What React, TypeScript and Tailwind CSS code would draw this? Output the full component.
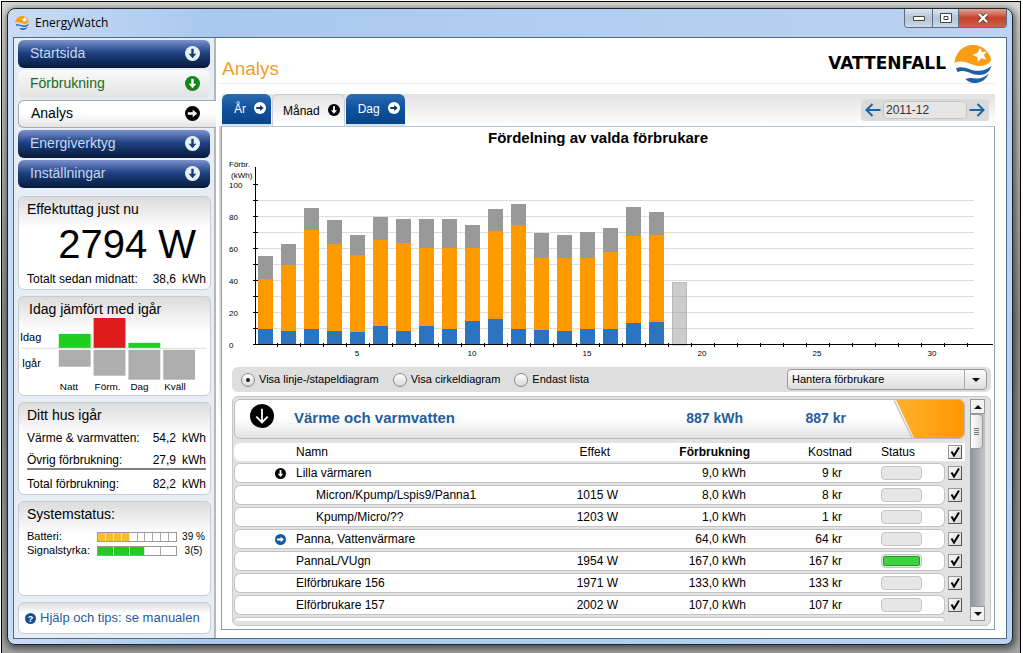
import React, { useState } from "react";
import clsx from "clsx";

type Tone = "navy" | "green" | "active";

const navItems: { label: string; tone: Tone }[] = [
  { label: "Startsida", tone: "navy" },
  { label: "Förbrukning", tone: "green" },
  { label: "Analys", tone: "active" },
  { label: "Energiverktyg", tone: "navy" },
  { label: "Inställningar", tone: "navy" },
];

// Blue level, orange level and total for each day, in kWh
const days = [
  [10, 41, 55.5],
  [9, 50, 63],
  [10, 72, 85.5],
  [9, 63, 78],
  [8, 56, 68.5],
  [12, 65.5, 80],
  [9, 63.5, 78.5],
  [12, 60.5, 78.5],
  [10, 60.5, 79],
  [15, 60.5, 75],
  [16, 71, 85],
  [10, 75, 88],
  [9.5, 54.5, 70],
  [8.5, 54.5, 69],
  [10, 54.5, 70.5],
  [10, 58, 73],
  [13.5, 68, 86],
  [14.5, 69, 83],
];

const rows = [
  { name: "Lilla värmaren", toggle: "down", power: "", use: "9,0 kWh", cost: "9 kr" },
  { name: "Micron/Kpump/Lspis9/Panna1", nested: true, power: "1015 W", use: "8,0 kWh", cost: "8 kr" },
  { name: "Kpump/Micro/??", nested: true, power: "1203 W", use: "1,0 kWh", cost: "1 kr" },
  { name: "Panna, Vattenvärmare", toggle: "right", power: "", use: "64,0 kWh", cost: "64 kr" },
  { name: "PannaL/VUgn", power: "1954 W", use: "167,0 kWh", cost: "167 kr", on: true },
  { name: "Elförbrukare 156", power: "1971 W", use: "133,0 kWh", cost: "133 kr" },
  { name: "Elförbrukare 157", power: "2002 W", use: "107,0 kWh", cost: "107 kr" },
];

const ArrowBadge = ({
  dir,
  disc,
  arrow,
  className,
  thin,
}: {
  dir: "down" | "right";
  disc: string;
  arrow: string;
  className?: string;
  thin?: boolean;
}) => (
  <svg viewBox="0 0 16 16" className={clsx("shrink-0", className)} aria-hidden="true">
    <circle cx="8" cy="8" r="8" fill={disc} />
    <g transform={dir === "down" ? "rotate(90 8 8)" : undefined}>
      {thin ? (
        <path d="M3.2 8h9M8.4 4.2 12.3 8l-3.9 3.8" fill="none" stroke={arrow} strokeWidth="1.2" />
      ) : (
        <path d="M3 6.7h5.2V3.9L13 8l-4.8 4.1V9.3H3z" fill={arrow} />
      )}
    </g>
  </svg>
);

const Logo = ({ className }: { className?: string }) => (
  <svg viewBox="0 0 38 38" className={className} aria-hidden="true">
    <path d="M.5 18C1 8 8.500 0 19 0c9.500 0 17 6.500 18.300 15.500-3.800 4.300-8 6-13.300 5.500-8-.8-14-7.500-23.500-3z" fill="#fa9d14" />
    <path d="m26.200 3 1.900 4.100 4.900-.6-3.300 3.600 2.600 4.400-5-1.200-3.500 3.700-.5-4.900-4.800-2.200 4.700-1.900z" fill="#fff" />
    <path d="M2 23.500c5-2.300 9-1 14 .8 7 2.400 14 2.500 21.500-3.300-1.800 6-6 9-12.500 9-8.500 0-12.500-6.500-21.500-3z" fill="#1f5fa8" />
    <path d="M11.500 34c4.500-1.800 7.500-.8 11-.6 4.500.2 8-1 12.500-4.900C32 35 26 38.300 20 38c-3.500-.2-6-1.500-8.500-4z" fill="#1f5fa8" />
  </svg>
);

const Card = ({
  title,
  children,
  className,
}: {
  title?: string;
  children: React.ReactNode;
  className?: string;
}) => (
  <section
    className={clsx(
      "rounded-md border border-[#c6ccd2] bg-gradient-to-b from-[#dcdcdc] via-white via-35% to-white",
      className,
    )}
  >
    {title && <h2 className="pt-1 text-sm leading-4">{title}</h2>}
    {children}
  </section>
);

const EnergyLine = ({ label, value }: { label: string; value: string }) => (
  <div className="flex justify-between text-xs">
    <span>{label}</span>
    <span className="flex gap-1.5">
      <span>{value}</span>
      <span>kWh</span>
    </span>
  </div>
);

const Meter = ({
  label,
  cells,
  filled,
  color,
  value,
}: {
  label: string;
  cells: number;
  filled: number;
  color: string;
  value: string;
}) => (
  <div className="flex h-3.5 items-center text-[11px]">
    <span className="w-[70px]">{label}</span>
    <span className="flex h-2.5 w-20 border border-[#999]">
      {Array.from({ length: cells }, (_, i) => (
        <span
          key={i}
          className={clsx(
            "flex-1 not-last:border-r",
            i < filled ? "border-[#e4e4c8]" : "border-[#aaa]",
            i < filled && color,
          )}
        />
      ))}
    </span>
    <span className="flex-1 text-center text-[10px]">{value}</span>
  </div>
);

const CompareChart = () => (
  <svg viewBox="0 0 192 78" className="block w-full font-['Liberation_Sans',sans-serif]" role="img" aria-label="Idag jämfört med igår">
    <path d="M3 31.500h186" stroke="#ddd" />
    <rect x="40" y="17" width="32" height="14" fill="#1ecf1e" />
    <rect x="75" y="1" width="32" height="30" fill="#df1b1b" />
    <rect x="110" y="26" width="32" height="5" fill="#1ecf1e" />
    <rect x="40" y="33" width="32" height="17" fill="#adadad" />
    <rect x="75" y="33" width="32" height="26" fill="#adadad" />
    <rect x="110" y="33" width="32" height="30" fill="#adadad" />
    <rect x="145" y="33" width="32" height="30" fill="#adadad" />
    <g fontSize="11">
      <text x="1" y="24">Idag</text>
      <text x="3" y="50">Igår</text>
    </g>
    <g fontSize="10">
      <text x="41" y="73">Natt</text>
      <text x="76" y="73">Förm.</text>
      <text x="112" y="73">Dag</text>
      <text x="146" y="73">Kväll</text>
    </g>
  </svg>
);

const Sidebar = () => (
  <aside className="flex w-[202px] shrink-0 flex-col border-r-2 border-[#b4b8bc] bg-[#e6edf4] pt-0.5 pb-1 pl-1">
    <nav className="flex flex-col gap-0.5">
      {navItems.map(({ label, tone }) => (
        <button
          key={label}
          type="button"
          className={clsx(
            "flex h-7 items-center justify-between rounded-md pb-0.5 pl-3 text-sm",
            tone === "navy" &&
              "mr-1 bg-gradient-to-b from-[#7d93cf] via-[#1f4283] via-45% to-[#061b3b] pr-2.5 text-[#c9d9f0]",
            tone === "green" &&
              "mr-1 bg-gradient-to-b from-[#fafafa] to-[#e2e2e2] pr-2.5 text-[#1a6b1a]",
            tone === "active" &&
              "-mr-0.5 rounded-r-none border border-r-0 border-[#aaa] bg-gradient-to-b from-white via-white to-[#e4e4e4] pr-4",
          )}
        >
          {label}
          {tone === "navy" && (
            <ArrowBadge dir="down" disc="#e8f2fb" arrow="#143f7a" className="size-[15px]" />
          )}
          {tone === "green" && (
            <ArrowBadge dir="down" disc="#14851a" arrow="#fff" className="size-[15px]" />
          )}
          {tone === "active" && (
            <ArrowBadge dir="right" disc="#000" arrow="#fff" className="size-[15px]" />
          )}
        </button>
      ))}
    </nav>

    <div className="mt-2 mr-[3px] flex flex-1 flex-col gap-1.5">
      <Card title="Effektuttag just nu" className="pr-1 pb-0.5 pl-2">
        <p className="pr-2.5 text-right text-[40px] leading-[54px]">2794 W</p>
        <EnergyLine label="Totalt sedan midnatt:" value="38,6" />
      </Card>

      <Card>
        <h2 className="pt-1 pl-2.5 text-sm leading-4">Idag jämfört med igår</h2>
        <CompareChart />
      </Card>

      <Card title="Ditt hus igår" className="pr-1 pb-0.5 pl-2">
        <div className="flex flex-col gap-1.5 pt-[7px]">
          <EnergyLine label="Värme & varmvatten:" value="54,2" />
          <div className="border-b-2 border-[#808080]">
            <EnergyLine label="Övrig förbrukning:" value="27,9" />
          </div>
          <EnergyLine label="Total förbrukning:" value="82,2" />
        </div>
      </Card>

      <Card title="Systemstatus:" className="flex-1 pl-2">
        <div className="pt-2">
          <Meter label="Batteri:" cells={10} filled={4} color="bg-[#f8bd3c]" value="39 %" />
          <Meter label="Signalstyrka:" cells={5} filled={3} color="bg-[#1ecf1e]" value="3(5)" />
        </div>
      </Card>

      <Card className="flex h-8 items-center pl-1.5">
        <a href="#manual" className="flex items-center gap-1 text-[13px] text-[#1f5c99]">
          <span className="grid size-[11px] place-items-center rounded-full bg-[#125093] text-[9px] font-bold text-white">
            ?
          </span>
          Hjälp och tips: se manualen
        </a>
      </Card>
    </div>
  </aside>
);

const tabs = [
  { label: "År", active: false },
  { label: "Månad", active: true },
  { label: "Dag", active: false },
];

const Tabs = () => (
  <div className="flex items-center justify-between bg-gradient-to-b from-[#e2e2e2] to-white pr-1.5">
    <div role="tablist" className="flex gap-px">
      {tabs.map(({ label, active }) => (
        <button
          key={label}
          type="button"
          role="tab"
          aria-selected={active}
          className={clsx(
            "flex h-8 items-center gap-2 rounded-t-md text-xs",
            active
              ? "border border-b-0 border-[#ccc] bg-gradient-to-b from-[#e4e4e4] to-white pr-1 pl-2.5"
              : "border-b-2 border-[#d5e3f2] bg-gradient-to-b from-[#2a6cb0] via-[#0f519c] to-[#06458c] pr-[5px] pl-3 text-white",
          )}
        >
          {label}
          <ArrowBadge
            dir={active ? "down" : "right"}
            disc={active ? "#000" : "#fff"}
            arrow={active ? "#fff" : "#0c3a70"}
            className="mb-0.5 size-3"
          />
        </button>
      ))}
    </div>
    <div className="flex h-[22px] items-center rounded bg-[#dadada] px-1">
      <button type="button" aria-label="Föregående månad">
        <BigArrow />
      </button>
      <input
        aria-label="Månad"
        defaultValue="2011-12"
        className="mx-0.5 h-[18px] w-[84px] rounded-sm border border-[#c8c8c8] bg-[#e6e6e6] px-0.5 text-xs text-[#333]"
      />
      <button type="button" aria-label="Nästa månad" className="rotate-180">
        <BigArrow />
      </button>
    </div>
  </div>
);

const BigArrow = () => (
  <svg viewBox="0 0 16 14" className="h-3.5 w-4" aria-hidden="true">
    <path d="M15.500 7H2M7.500 1 1.500 7l6 6" fill="none" stroke="#1b62a9" strokeWidth="2" />
  </svg>
);

const AXIS_X = 33;
const BASE_Y = 198;
const PX_PER_KWH = 1.6;
const STEP = 23;

const level = (kwh: number) => BASE_Y - kwh * PX_PER_KWH;

const UsageChart = () => (
  <svg viewBox="0 0 772 218" className="block w-full font-['Liberation_Sans',sans-serif]" role="img" aria-label="Förbrukning per dag">
    {[10, 20, 30, 40, 50, 60, 70, 80, 90].map((v) => (
      <path key={v} d={`M${AXIS_X} ${level(v) - 0.5}H752`} stroke="#dcdcdc" />
    ))}
    {days.map(([blue, orange, total], i) => {
      const x = AXIS_X + 3 + i * STEP;
      return (
        <g key={i} shapeRendering="crispEdges">
          <rect x={x} y={level(total)} width="15" height={(total - orange) * PX_PER_KWH} fill="#999" />
          <rect x={x} y={level(orange)} width="15" height={(orange - blue) * PX_PER_KWH} fill="#ff9900" />
          <rect x={x} y={level(blue)} width="15" height={blue * PX_PER_KWH} fill="#2b74c0" />
        </g>
      );
    })}
    <rect x={AXIS_X + 3.5 + 18 * STEP} y={level(39)} width="14" height={39 * PX_PER_KWH} fill="#999" fillOpacity="0.5" stroke="#999" strokeOpacity="0.6" />
    <g stroke="#000" shapeRendering="crispEdges">
      <path d={`M${AXIS_X + 0.5} 20V${BASE_Y}M${AXIS_X} ${BASE_Y - 0.5}H771`} />
      {Array.from({ length: 11 }, (_, i) => (
        <path key={i} d={`M${AXIS_X - 2} ${level(i * 10) - 0.5}h5`} />
      ))}
      {Array.from({ length: 31 }, (_, i) => (
        <path key={i} d={`M${AXIS_X + 22.5 + i * STEP} ${BASE_Y - 2}v4`} />
      ))}
    </g>
    <g fontSize="8">
      <text x="7" y="20">Förbr.</text>
      <text x="9" y="31">(kWh)</text>
      {[0, 20, 40, 60, 80, 100].map((v) => (
        <text key={v} x="7" y={level(v) + 3}>
          {v}
        </text>
      ))}
      {[5, 10, 15, 20, 25, 30].map((d) => (
        <text key={d} x={AXIS_X - 13 + d * STEP} y="209" textAnchor="middle">
          {d}
        </text>
      ))}
    </g>
  </svg>
);

const views = ["Visa linje-/stapeldiagram", "Visa cirkeldiagram", "Endast lista"];

const ViewBar = () => {
  const [view, setView] = useState(views[0]);

  return (
    <div className="flex h-[25px] items-center justify-between rounded-md bg-[#dedede] pr-1 pl-[9px] text-[11px]">
      <div className="flex gap-3.5">
        {views.map((v) => (
          <label key={v} className="flex items-center gap-1">
            <input
              type="radio"
              name="view"
              checked={view === v}
              onChange={() => setView(v)}
              className="grid size-3.5 appearance-none place-items-center rounded-full border border-[#888] bg-gradient-to-b from-white to-[#d8d8d8] checked:before:size-1 checked:before:rounded-full checked:before:bg-[#222] checked:before:content-['']"
            />
            {v}
          </label>
        ))}
      </div>
      <div className="relative">
        <select
          aria-label="Hantera förbrukare"
          className="block h-[21px] w-[200px] appearance-none rounded-sm border border-[#999] bg-gradient-to-b from-[#fafafa] to-[#dedede] px-1"
        >
          <option>Hantera förbrukare</option>
        </select>
        <span className="pointer-events-none absolute inset-y-px right-px grid w-[22px] place-items-center border-l border-[#aaa]">
          <Triangle />
        </span>
      </div>
    </div>
  );
};

const Triangle = ({ className }: { className?: string }) => (
  <svg viewBox="0 0 8 4" className={clsx("h-1 w-2", className)} aria-hidden="true">
    <path d="M0 0h8L4 4z" fill="#111" />
  </svg>
);

const Tick = ({ label }: { label: string }) => (
  <span className="mx-auto grid size-3.5">
    <input
      type="checkbox"
      defaultChecked
      aria-label={label}
      className="peer col-start-1 row-start-1 size-3.5 appearance-none border border-[#999] border-r-[#555] border-b-[#555] bg-gradient-to-br from-[#fafafa] to-[#d8d8d8]"
    />
    <svg viewBox="0 0 14 14" className="pointer-events-none invisible col-start-1 row-start-1 size-3.5 peer-checked:visible" aria-hidden="true">
      <path d="M3.500 6.500 6 10.500 11 2.500" fill="none" stroke="#000" strokeWidth="2" />
    </svg>
  </span>
);

const ConsumerTable = () => (
  <table className="w-full table-fixed border-separate border-spacing-x-0 border-spacing-y-0.5 text-xs">
    <colgroup>
      <col />
      <col className="w-[68px]" />
      <col className="w-[132px]" />
      <col className="w-[102px]" />
      <col className="w-[93px]" />
      <col className="w-5" />
    </colgroup>
    <thead>
      <tr className="h-[18px] *:bg-white *:p-0 *:font-normal">
        <th scope="col" className="rounded-l-md">
          <span className="block pl-[62px] text-left">Namn</span>
        </th>
        <th scope="col">
          <span className="block pr-2 text-right">Effekt</span>
        </th>
        <th scope="col">
          <span className="block text-right font-bold">Förbrukning</span>
        </th>
        <th scope="col">
          <span className="block text-right">Kostnad</span>
        </th>
        <th scope="col">
          <span className="block pl-[29px] text-left">Status</span>
        </th>
        <th scope="col">
          <Tick label="Välj alla" />
        </th>
      </tr>
    </thead>
    <tbody>
      {rows.map((row) => (
        <tr key={row.name} className="h-5 *:border-y *:border-[#c4c4c4] *:bg-white *:p-0">
          <td className="rounded-l-md border-l">
            <span className={clsx("flex items-center", row.nested ? "pl-[81px]" : "pl-10")}>
              {!row.nested && (
                <span className="w-[21px]">
                  {row.toggle && (
                    <button type="button" aria-label={row.name} className="block">
                      <ArrowBadge
                        dir={row.toggle === "down" ? "down" : "right"}
                        disc={row.toggle === "down" ? "#000" : "#125a9e"}
                        arrow="#fff"
                        className="size-[11px]"
                      />
                    </button>
                  )}
                </span>
              )}
              {row.name}
            </span>
          </td>
          <td className="text-right">{row.power}</td>
          <td className="text-right">
            <span className="pr-1">{row.use}</span>
          </td>
          <td className="text-right">
            <span className="pr-2.5">{row.cost}</span>
          </td>
          <td className="rounded-r-md border-r">
            <span className="ml-[29px] block h-3.5 w-[41px] rounded border border-[#c4c4c4] bg-[#e6e6e6] p-px">
              {row.on && <span className="block h-full rounded-xs border border-[#259a25] bg-[#3fd23f]" />}
            </span>
          </td>
          <td className="border-y-transparent! bg-transparent!">
            <Tick label={row.name} />
          </td>
        </tr>
      ))}
    </tbody>
  </table>
);

const ConsumerList = () => (
  <div className="flex gap-[5px] rounded-md border border-[#c8c8c8] bg-[#e2e2e2] pt-0.5 pr-[5px] pb-1 pl-px">
    <div className="min-w-0 flex-1">
      <div className="flex h-10 items-stretch overflow-hidden rounded-md border border-[#bbb] bg-gradient-to-b from-white via-white to-[#e2e2e2] text-[15px] font-bold text-[#235d9c]">
        <button type="button" aria-label="Fäll ihop" className="pb-1.5 pl-[15px]">
          <ArrowBadge dir="down" disc="#000" arrow="#fff" thin className="size-6" />
        </button>
        <span className="flex flex-1 items-center pb-0.5 pl-5">Värme och varmvatten</span>
        <span className="flex items-center pb-0.5 text-sm">887 kWh</span>
        <span className="flex w-[103px] items-center justify-end pb-0.5 text-sm">887 kr</span>
        <svg viewBox="0 0 70 38" className="ml-12 h-[38px] w-[70px]" aria-hidden="true">
          <defs>
            <linearGradient id="orange" x1="0" x2="1">
              <stop offset="0" stopColor="#ffb02e" />
              <stop offset="1" stopColor="#ff9800" />
            </linearGradient>
          </defs>
          <path d="M2 0h68v38H20z" fill="url(#orange)" />
          <path d="M0 0l18 38" fill="none" stroke="#c9c9c9" strokeWidth="1.5" />
        </svg>
      </div>
      <div className="pt-0.5">
        <ConsumerTable />
      </div>
      <div className="mr-5 h-1 rounded-t-md border border-b-0 border-[#c4c4c4] bg-white" />
    </div>

    <div className="flex w-[15px] flex-col bg-gradient-to-r from-[#8f9498] to-[#c3c6c9]">
      <button type="button" aria-label="Rulla upp" className="grid h-[15px] place-items-center border border-[#999] bg-[#f2f2f2]">
        <Triangle className="rotate-180" />
      </button>
      <div className="mr-0.5 grid h-[35px] place-items-center rounded-r border border-[#999] bg-gradient-to-r from-white to-[#ddd]">
        <svg viewBox="0 0 5 8" className="h-2 w-[5px]" aria-hidden="true">
          <path d="M0 .5h5M0 2.500h5M0 4.500h5M0 6.500h5" stroke="#777" />
        </svg>
      </div>
      <button type="button" aria-label="Rulla ned" className="mt-auto grid h-[15px] place-items-center border border-[#999] bg-[#f2f2f2]">
        <Triangle />
      </button>
    </div>
  </div>
);

const TitleBar = () => (
  <header className="flex h-7 items-start justify-between pr-[5px] pl-[7px]">
    <div className="flex h-7 items-center gap-1.5 font-['Open_Sans','Noto_Sans',sans-serif] text-xs">
      <Logo className="size-3.5" />
      EnergyWatch
    </div>
    <div className="flex h-[19px] overflow-hidden rounded-b border border-t-0 border-[#5c6d80]">
      <button type="button" aria-label="Minimera" className="grid w-7 place-items-center border-r border-[#5c6d80] bg-gradient-to-b from-[#dfe8f2] via-[#b4c3d6] to-[#cddbea]">
        <svg viewBox="0 0 12 5" className="h-[5px] w-3" aria-hidden="true">
          <path d="M.5.500h11v4H.5z" fill="#fff" stroke="#444" />
        </svg>
      </button>
      <button type="button" aria-label="Maximera" className="grid w-[26px] place-items-center border-r border-[#5c6d80] bg-gradient-to-b from-[#dfe8f2] via-[#b4c3d6] to-[#cddbea]">
        <svg viewBox="0 0 12 10" className="h-2.5 w-3" aria-hidden="true">
          <path d="M.5.500h11v9H.5zM4 3.500h4v3H4z" fill="#fff" stroke="#444" />
        </svg>
      </button>
      <button type="button" aria-label="Stäng" className="grid w-[47px] place-items-center bg-gradient-to-b from-[#e3a294] via-[#c2402c] to-[#d4614a]">
        <svg viewBox="0 0 12 10" className="h-2.5 w-3" aria-hidden="true">
          <path d="M2 1l8 8M10 1 2 9" stroke="#444" strokeWidth="4" />
          <path d="M2 1l8 8M10 1 2 9" stroke="#fff" strokeWidth="2.4" />
        </svg>
      </button>
    </div>
  </header>
);

const App = () => {
  return (
    <div className="flex min-h-screen bg-white pt-px pr-0.5 pl-px font-['Liberation_Sans',Arial,sans-serif] text-black">
      <div className="flex flex-1 border border-b-0 border-black bg-gradient-to-b from-[#d6d6d2] via-[#8d8d8b] to-[#a3a3a3] pt-1.5 pr-[7px] pb-2 pl-[5px]">
        <div className="flex flex-1 flex-col rounded-lg border border-[#20262e] bg-gradient-to-r from-[#c9dcf4] via-[#a9c8ee] via-20% to-[#bcd3f1] shadow-[1px_2px_6px_2px_rgba(0,0,0,0.5)]">
          <TitleBar />
          <div className="mx-[5px] mb-[5px] flex flex-1 border border-[#4f6b8c] bg-white">
            <Sidebar />
            <main className="flex min-w-0 flex-1 flex-col pr-[11px] pb-2 pl-[3px]">
              <div className="flex h-[46px] items-center justify-between border-b border-[#ececec] pr-[3px] pl-[3px]">
                <h1 className="pt-4.5 text-[19px] text-[#f0a028]">Analys</h1>
                <div className="flex items-center gap-2 pt-1.5">
                  <span className="font-['DejaVu_Sans',sans-serif] text-[17px] font-bold">VATTENFALL</span>
                  <Logo className="size-[38px]" />
                </div>
              </div>
              <div className="pt-2.5 pl-[3px]">
                <Tabs />
              </div>
              <div className="flex flex-1 bg-gradient-to-b from-[#cfcfcf] via-[#e2e2e2] to-white to-60% pl-0.5">
                <section className="min-w-0 flex-1 border border-[#8e9bab] border-t-[#b8c6d6] bg-white">
                  <h2 className="pt-px pr-5 text-center text-[15px] leading-[19px] font-bold">
                    Fördelning av valda förbrukare
                  </h2>
                  <UsageChart />
                  <div className="flex flex-col gap-1 pt-0.5 pr-[3px] pl-2.5">
                    <ViewBar />
                    <ConsumerList />
                  </div>
                </section>
              </div>
            </main>
          </div>
        </div>
      </div>
    </div>
  );
};

export default App;
